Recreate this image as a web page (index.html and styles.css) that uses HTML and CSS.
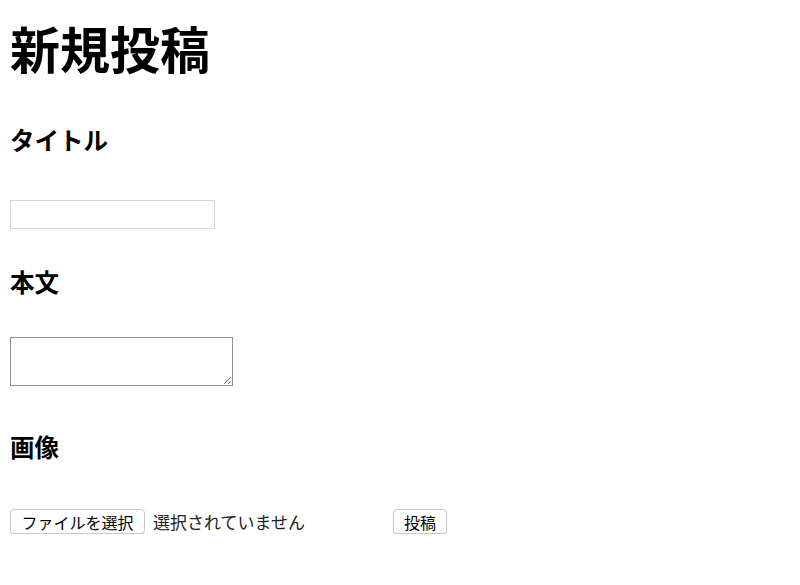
FILE: index.html
```html
<!DOCTYPE html>
<html lang="ja">
<head>
<meta charset="utf-8">
<title>新規投稿</title>
<link rel="stylesheet" href="styles.css">
</head>
<body>
<form class="post-form">
  <h1 class="page-title">新規投稿</h1>
  <h3 class="label label-title">タイトル</h3>
  <input class="text-input" type="text">
  <h3 class="label label-body">本文</h3>
  <textarea class="text-area"></textarea>
  <h3 class="label label-image">画像</h3>
  <div class="actions">
    <div class="file-field">
      <span class="btn file-btn">ファイルを選択</span>
      <span class="file-status">選択されていません</span>
    </div>
    <button class="btn submit-btn" type="button">投稿</button>
  </div>
</form>
</body>
</html>
```

FILE: styles.css
```css
html, body {
  margin: 0;
  padding: 0;
  background: #fff;
}
body {
  padding: 0 10px;
  font-family: "Noto Sans CJK JP", "Noto Sans", sans-serif;
  color: #000;
}
.post-form {
  display: flex;
  flex-direction: column;
  align-items: flex-start;
  padding-top: 17px;
}
.page-title {
  margin: 0;
  font-size: 50px;
  line-height: 60px;
  font-weight: 700;
}
.label {
  margin: 0;
  font-size: 24.5px;
  line-height: 30px;
  font-weight: 700;
}
.label-title { margin-top: 48px; }
.label-body { margin-top: 38px; }
.label-image { margin-top: 46px; }
.text-input {
  margin: 45px 0 0;
  box-sizing: border-box;
  width: 205px;
  height: 29px;
  border: 1px solid #d6d6d6;
  border-radius: 0;
  padding: 2px 4px;
  font: inherit;
  font-size: 16px;
  outline: none;
}
.text-area {
  display: block;
  margin: 40px 0 0;
  box-sizing: border-box;
  width: 223px;
  height: 49px;
  border: 1px solid #8f8f8f;
  border-radius: 0;
  padding: 2px;
  font: inherit;
  font-size: 16px;
  outline: none;
}
.actions {
  margin-top: 47px;
  display: flex;
  align-items: center;
}
.file-field {
  width: 375px;
  display: flex;
  align-items: center;
  gap: 8px;
}
.btn {
  box-sizing: border-box;
  height: 25px;
  display: inline-flex;
  align-items: center;
  justify-content: center;
  background: #fff;
  border: 1px solid #c9c9c9;
  border-radius: 4px;
  box-shadow: 0 1px 1px rgba(0,0,0,0.08);
  font-family: "Noto Sans CJK JP", sans-serif;
  font-size: 16px;
  color: #000;
  line-height: 1;
}
.file-btn {
  width: 135px;
  padding: 0;
}
.file-status {
  font-size: 17px;
  color: #222;
}
.submit-btn {
  margin-left: 8px;
  width: 54px;
  padding: 0;
}
```
